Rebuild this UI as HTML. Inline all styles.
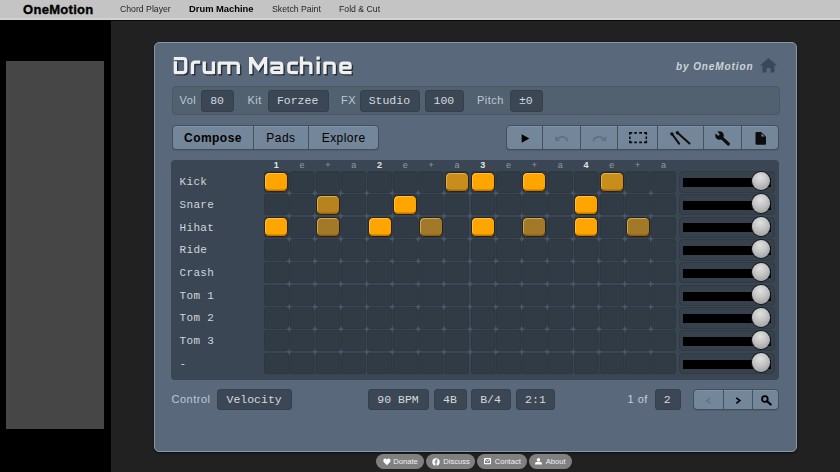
<!DOCTYPE html>
<html><head><meta charset="utf-8">
<style>
*{margin:0;padding:0;box-sizing:border-box}
html,body{width:840px;height:472px;overflow:hidden;background:#212121;font-family:"Liberation Sans",sans-serif}
.a{position:absolute}
#nav{left:0;top:0;width:840px;height:18px;background:#c4c4c4}
#navline{left:0;top:17.8px;width:840px;height:1.8px;background:#d2d2d2;border-bottom:1.2px solid #080808;box-sizing:content-box}
.nl{position:absolute;top:3.1px;font-size:8.6px;color:#262626;line-height:12px;white-space:nowrap;transform-origin:0 0}
#side{left:0;top:19.6px;width:111px;height:453px;background:#000}
#ad{left:6px;top:61px;width:98.3px;height:368.3px;background:#464646}
#panel{left:153.5px;top:41.5px;width:643.5px;height:410.5px;background:#59697b;border:1px solid #8797a7;border-radius:5px;box-shadow:0 1px 2px rgba(0,0,0,.6)}
#title{left:171.8px;top:51px;font-size:22.5px;font-weight:bold;color:#efefef;text-shadow:1.5px 1.5px 1px #27303a;line-height:30px;white-space:nowrap;transform:scaleX(1.165);transform-origin:0 0}
#by{left:676px;top:60px;font-size:10px;font-weight:bold;font-style:italic;color:#cdd2d7;letter-spacing:0.9px;line-height:14px}
#bar{left:171.6px;top:85.5px;width:608px;height:29.5px;background:#526170;border:1px solid #4a5765;border-radius:4px}
.lab{position:absolute;font-size:11px;color:#bfc8d1;letter-spacing:0.5px;line-height:14px;white-space:nowrap}
.box{position:absolute;background:#3b4755;border:1px solid #35404c;border-radius:3px;color:#d4d9de;font-family:"Liberation Mono",monospace;font-size:11.5px;text-align:center;line-height:19.5px;white-space:nowrap;text-indent:-0.8px}
.tabs{position:absolute;border:1px solid #424f5c;border-radius:4px;background:#74869a;overflow:hidden;box-shadow:inset 0 1px 0 #8092a4,0 0.5px 0.5px rgba(0,0,0,.2)}
.tabs>i{position:absolute;top:0;bottom:0;width:1px;background:#44525f}
.tt{position:absolute;top:0.8px;line-height:23px;font-size:12px;color:#000;letter-spacing:0.45px;white-space:nowrap;text-align:center}
#grid{left:171px;top:160px;width:608px;height:219.5px;background:#3a4653;border-radius:4px}
.rl{position:absolute;left:179.6px;font-family:"Liberation Mono",monospace;font-size:11px;color:#d0d5da;letter-spacing:0.3px;line-height:14px;white-space:nowrap}
.hd{position:absolute;top:159px;width:25.82px;text-align:center;font-size:9px;color:#8f9aa5;line-height:12px}
.hd.b{color:#e0e4e8;font-weight:bold}
.c{position:absolute;width:24.5px;height:21.35px;background:#313b46;border-radius:3.5px;box-shadow:inset 0 0 0 0.6px #2d3640}
.bd{position:absolute;height:20.75px;background:#343e49;border-radius:2px}
.dm{position:absolute;width:6px;height:6px;background:radial-gradient(circle,#4a5866 0,#4a5866 0.9px,rgba(74,88,102,0) 2.2px),linear-gradient(#435160,#435160) center/1.3px 100% no-repeat,linear-gradient(#435160,#435160) center/100% 1.3px no-repeat}
.on{position:absolute;width:24px;height:20.2px;background:#ffa500;border:1px solid #2a2418;border-radius:5px;box-shadow:inset 1px 1px 0 rgba(255,225,150,.45),inset 0 -1.5px 0 rgba(120,60,0,.45)}
.on.m{background:#c88d1b}
.on.s{background:#b6831f}
.on.d{background:#a27928}
.sb{position:absolute;left:679.3px;width:95.5px;height:21.35px;background:#36414c;border:1px solid #303a44;border-radius:4px}
.bk{position:absolute;left:683.2px;width:87.5px;height:9px;background:#000}
.kn{position:absolute;left:751.5px;width:18.7px;height:18.7px;border-radius:50%;background:radial-gradient(circle at 45% 30%,#e0e0e0 0,#c6c6c6 40%,#a4a4a4 80%,#868686 100%);box-shadow:0 0 0 1px rgba(20,24,28,.9)}
.pill{position:absolute;top:454px;height:14.8px;border-radius:7.5px;background:#808080;color:#f0f0f0;font-size:7.6px;line-height:15px;white-space:nowrap}
</style></head><body>

<div class="a" id="nav">
  <div class="nl" style="left:23px;top:2px;font-size:13px;font-weight:bold;color:#000;letter-spacing:0.3px;line-height:15px;-webkit-text-stroke:0.35px #000">OneMotion</div>
  <div class="nl" style="left:120px;transform:scaleX(1.012)">Chord Player</div>
  <div class="nl" style="left:189.3px;font-weight:bold;color:#000;transform:scaleX(1.09)">Drum Machine</div>
  <div class="nl" style="left:271.6px;transform:scaleX(1.012)">Sketch Paint</div>
  <div class="nl" style="left:339.2px;transform:scaleX(1.012)">Fold &amp; Cut</div>
</div>
<div class="a" id="navline"></div>
<div class="a" id="side"></div><div class="a" id="ad"></div>
<div class="a" id="panel"></div>
<svg class="a" style="left:0;top:0" width="840" height="100" viewBox="0 0 840 100">
 <defs><filter id="sh" x="-5%" y="-20%" width="110%" height="140%"><feGaussianBlur stdDeviation="0.6"/></filter></defs>
 <g id="tg" fill="none" stroke-width="3.3" stroke-linejoin="round">
  <g transform="translate(1.4,1.4)" stroke="#232b33" filter="url(#sh)" opacity="0.9"><path d="M173.8 58.55 H183.3 Q185.75 58.55 185.75 61 V70.1 Q185.75 72.55 183.3 72.55 H175.35 V61.3
 M192.45 74 V65 Q192.45 62.1 195.3 62.1 H200.2
 M204.25 61.6 V70 Q204.25 72.55 206.8 72.55 H213.4 M213.4 61.6 V74
 M219.25 74 V63.15 H235.8 Q238.3 63.15 238.3 65.6 V74 M228.8 63.15 V74

 M270.3 63.15 H279.3 Q281.8 63.15 281.8 65.6 V74 M281.8 68 H274.3 Q271.8 68 271.8 69.8 V70.5 Q271.8 72.55 274 72.55 H281.8
 M297.9 63.15 H291.3 Q288.85 63.15 288.85 65.6 V70.1 Q288.85 72.55 291.3 72.55 H297.9
 M301.55 56.6 V74 M301.55 63.15 H308.4 Q310.9 63.15 310.9 65.6 V74
 M318.15 56.6 V59.8 M318.15 61.6 V74
 M324.95 74 V63.15 H331.7 Q334.2 63.15 334.2 65.6 V74
 M340.85 67.9 H350.1 V65.6 Q350.1 63.15 347.6 63.15 H343.3 Q340.85 63.15 340.85 65.6 V70.1 Q340.85 72.55 343.3 72.55 H351.6"/><path d="M249 74 V57 H252.7 L258.4 65.6 L263.9 57 H267.3 V74 H264 V63.2 L258.4 71.6 L252.4 63.2 V74 Z" fill="#232b33" stroke="none"/></g>
  <g stroke="#f0f0f0"><path d="M173.8 58.55 H183.3 Q185.75 58.55 185.75 61 V70.1 Q185.75 72.55 183.3 72.55 H175.35 V61.3
 M192.45 74 V65 Q192.45 62.1 195.3 62.1 H200.2
 M204.25 61.6 V70 Q204.25 72.55 206.8 72.55 H213.4 M213.4 61.6 V74
 M219.25 74 V63.15 H235.8 Q238.3 63.15 238.3 65.6 V74 M228.8 63.15 V74

 M270.3 63.15 H279.3 Q281.8 63.15 281.8 65.6 V74 M281.8 68 H274.3 Q271.8 68 271.8 69.8 V70.5 Q271.8 72.55 274 72.55 H281.8
 M297.9 63.15 H291.3 Q288.85 63.15 288.85 65.6 V70.1 Q288.85 72.55 291.3 72.55 H297.9
 M301.55 56.6 V74 M301.55 63.15 H308.4 Q310.9 63.15 310.9 65.6 V74
 M318.15 56.6 V59.8 M318.15 61.6 V74
 M324.95 74 V63.15 H331.7 Q334.2 63.15 334.2 65.6 V74
 M340.85 67.9 H350.1 V65.6 Q350.1 63.15 347.6 63.15 H343.3 Q340.85 63.15 340.85 65.6 V70.1 Q340.85 72.55 343.3 72.55 H351.6"/></g><path d="M249 74 V57 H252.7 L258.4 65.6 L263.9 57 H267.3 V74 H264 V63.2 L258.4 71.6 L252.4 63.2 V74 Z" fill="#f0f0f0" stroke="none"/>
 </g>
 
</svg>
<div class="a" id="by">by OneMotion</div>
<svg class="a" style="left:760px;top:58px" width="17" height="15" viewBox="0 0 17 15"><path d="M8.5 0 L17 7.5 L14.5 7.5 L14.5 14.5 L10.5 14.5 L10.5 10 L6.5 10 L6.5 14.5 L2.5 14.5 L2.5 7.5 L0 7.5 Z" fill="#3b4857"/></svg>

<div class="a" id="bar"></div>
<div class="lab" style="left:179.5px;top:93px">Vol</div>
<div class="box" style="left:201px;top:90px;width:33px;height:21.5px">80</div>
<div class="lab" style="left:247.5px;top:93px">Kit</div>
<div class="box" style="left:267.5px;top:90px;width:61px;height:21.5px">Forzee</div>
<div class="lab" style="left:341px;top:93px">FX</div>
<div class="box" style="left:359.5px;top:90px;width:60.5px;height:21.5px">Studio</div>
<div class="box" style="left:424.5px;top:90px;width:39.5px;height:21.5px">100</div>
<div class="lab" style="left:477px;top:93px">Pitch</div>
<div class="box" style="left:510px;top:90px;width:32.5px;height:21.5px">±0</div>

<div class="tabs" style="left:171.5px;top:125.2px;width:207px;height:25.3px">
  <div class="tt" style="left:0;width:81px;font-weight:bold">Compose</div><i style="left:80.9px"></i>
  <div class="tt" style="left:81.9px;width:53px">Pads</div><i style="left:135.1px"></i>
  <div class="tt" style="left:136.1px;width:70px">Explore</div>
</div>

<div class="tabs" style="left:505.8px;top:125.2px;width:273.2px;height:25.2px">
  <i style="left:35.7px"></i><i style="left:73.1px"></i><i style="left:110.7px"></i><i style="left:150.2px"></i><i style="left:196.4px"></i><i style="left:234px"></i>
</div>
<div class="a" id="grid"></div>
<div class="hd b" style="left:263.30px">1</div>
<div class="hd" style="left:289.12px">e</div>
<div class="hd" style="left:314.94px">+</div>
<div class="hd" style="left:340.76px">a</div>
<div class="hd b" style="left:366.58px">2</div>
<div class="hd" style="left:392.40px">e</div>
<div class="hd" style="left:418.22px">+</div>
<div class="hd" style="left:444.04px">a</div>
<div class="hd b" style="left:469.86px">3</div>
<div class="hd" style="left:495.68px">e</div>
<div class="hd" style="left:521.50px">+</div>
<div class="hd" style="left:547.32px">a</div>
<div class="hd b" style="left:573.14px">4</div>
<div class="hd" style="left:598.96px">e</div>
<div class="hd" style="left:624.78px">+</div>
<div class="hd" style="left:650.60px">a</div>
<div class="rl" style="top:175.10px">Kick</div>
<div class="bd" style="left:264.30px;top:171.50px;width:101.36px"></div>
<div class="bd" style="left:367.58px;top:171.50px;width:101.36px"></div>
<div class="bd" style="left:470.86px;top:171.50px;width:101.36px"></div>
<div class="bd" style="left:574.14px;top:171.50px;width:101.36px"></div>
<div class="c" style="left:264.00px;top:171.20px"></div>
<div class="c" style="left:289.82px;top:171.20px"></div>
<div class="c" style="left:315.64px;top:171.20px"></div>
<div class="c" style="left:341.46px;top:171.20px"></div>
<div class="c" style="left:367.28px;top:171.20px"></div>
<div class="c" style="left:393.10px;top:171.20px"></div>
<div class="c" style="left:418.92px;top:171.20px"></div>
<div class="c" style="left:444.74px;top:171.20px"></div>
<div class="c" style="left:470.56px;top:171.20px"></div>
<div class="c" style="left:496.38px;top:171.20px"></div>
<div class="c" style="left:522.20px;top:171.20px"></div>
<div class="c" style="left:548.02px;top:171.20px"></div>
<div class="c" style="left:573.84px;top:171.20px"></div>
<div class="c" style="left:599.66px;top:171.20px"></div>
<div class="c" style="left:625.48px;top:171.20px"></div>
<div class="c" style="left:651.30px;top:171.20px"></div>
<div class="on " style="left:264.25px;top:171.80px"></div>
<div class="on m" style="left:444.99px;top:171.80px"></div>
<div class="on " style="left:470.81px;top:171.80px"></div>
<div class="on " style="left:522.45px;top:171.80px"></div>
<div class="on m" style="left:599.91px;top:171.80px"></div>
<div class="sb" style="top:171.20px"></div>
<div class="bk" style="top:178.00px"></div>
<div class="kn" style="top:171.70px"></div>
<div class="rl" style="top:197.80px">Snare</div>
<div class="bd" style="left:264.30px;top:194.20px;width:101.36px"></div>
<div class="bd" style="left:367.58px;top:194.20px;width:101.36px"></div>
<div class="bd" style="left:470.86px;top:194.20px;width:101.36px"></div>
<div class="bd" style="left:574.14px;top:194.20px;width:101.36px"></div>
<div class="c" style="left:264.00px;top:193.90px"></div>
<div class="c" style="left:289.82px;top:193.90px"></div>
<div class="c" style="left:315.64px;top:193.90px"></div>
<div class="c" style="left:341.46px;top:193.90px"></div>
<div class="c" style="left:367.28px;top:193.90px"></div>
<div class="c" style="left:393.10px;top:193.90px"></div>
<div class="c" style="left:418.92px;top:193.90px"></div>
<div class="c" style="left:444.74px;top:193.90px"></div>
<div class="c" style="left:470.56px;top:193.90px"></div>
<div class="c" style="left:496.38px;top:193.90px"></div>
<div class="c" style="left:522.20px;top:193.90px"></div>
<div class="c" style="left:548.02px;top:193.90px"></div>
<div class="c" style="left:573.84px;top:193.90px"></div>
<div class="c" style="left:599.66px;top:193.90px"></div>
<div class="c" style="left:625.48px;top:193.90px"></div>
<div class="c" style="left:651.30px;top:193.90px"></div>
<div class="on s" style="left:315.89px;top:194.50px"></div>
<div class="on " style="left:393.35px;top:194.50px"></div>
<div class="on " style="left:574.09px;top:194.50px"></div>
<div class="dm" style="left:286.16px;top:190.24px"></div>
<div class="dm" style="left:311.98px;top:190.24px"></div>
<div class="dm" style="left:337.80px;top:190.24px"></div>
<div class="dm" style="left:363.62px;top:190.24px"></div>
<div class="dm" style="left:389.44px;top:190.24px"></div>
<div class="dm" style="left:415.26px;top:190.24px"></div>
<div class="dm" style="left:441.08px;top:190.24px"></div>
<div class="dm" style="left:466.90px;top:190.24px"></div>
<div class="dm" style="left:492.72px;top:190.24px"></div>
<div class="dm" style="left:518.54px;top:190.24px"></div>
<div class="dm" style="left:544.36px;top:190.24px"></div>
<div class="dm" style="left:570.18px;top:190.24px"></div>
<div class="dm" style="left:596.00px;top:190.24px"></div>
<div class="dm" style="left:621.82px;top:190.24px"></div>
<div class="dm" style="left:647.64px;top:190.24px"></div>
<div class="sb" style="top:193.90px"></div>
<div class="bk" style="top:200.70px"></div>
<div class="kn" style="top:194.40px"></div>
<div class="rl" style="top:220.50px">Hihat</div>
<div class="bd" style="left:264.30px;top:216.90px;width:101.36px"></div>
<div class="bd" style="left:367.58px;top:216.90px;width:101.36px"></div>
<div class="bd" style="left:470.86px;top:216.90px;width:101.36px"></div>
<div class="bd" style="left:574.14px;top:216.90px;width:101.36px"></div>
<div class="c" style="left:264.00px;top:216.60px"></div>
<div class="c" style="left:289.82px;top:216.60px"></div>
<div class="c" style="left:315.64px;top:216.60px"></div>
<div class="c" style="left:341.46px;top:216.60px"></div>
<div class="c" style="left:367.28px;top:216.60px"></div>
<div class="c" style="left:393.10px;top:216.60px"></div>
<div class="c" style="left:418.92px;top:216.60px"></div>
<div class="c" style="left:444.74px;top:216.60px"></div>
<div class="c" style="left:470.56px;top:216.60px"></div>
<div class="c" style="left:496.38px;top:216.60px"></div>
<div class="c" style="left:522.20px;top:216.60px"></div>
<div class="c" style="left:548.02px;top:216.60px"></div>
<div class="c" style="left:573.84px;top:216.60px"></div>
<div class="c" style="left:599.66px;top:216.60px"></div>
<div class="c" style="left:625.48px;top:216.60px"></div>
<div class="c" style="left:651.30px;top:216.60px"></div>
<div class="on " style="left:264.25px;top:217.20px"></div>
<div class="on d" style="left:315.89px;top:217.20px"></div>
<div class="on " style="left:367.53px;top:217.20px"></div>
<div class="on d" style="left:419.17px;top:217.20px"></div>
<div class="on " style="left:470.81px;top:217.20px"></div>
<div class="on d" style="left:522.45px;top:217.20px"></div>
<div class="on " style="left:574.09px;top:217.20px"></div>
<div class="on d" style="left:625.73px;top:217.20px"></div>
<div class="dm" style="left:286.16px;top:212.94px"></div>
<div class="dm" style="left:311.98px;top:212.94px"></div>
<div class="dm" style="left:337.80px;top:212.94px"></div>
<div class="dm" style="left:363.62px;top:212.94px"></div>
<div class="dm" style="left:389.44px;top:212.94px"></div>
<div class="dm" style="left:415.26px;top:212.94px"></div>
<div class="dm" style="left:441.08px;top:212.94px"></div>
<div class="dm" style="left:466.90px;top:212.94px"></div>
<div class="dm" style="left:492.72px;top:212.94px"></div>
<div class="dm" style="left:518.54px;top:212.94px"></div>
<div class="dm" style="left:544.36px;top:212.94px"></div>
<div class="dm" style="left:570.18px;top:212.94px"></div>
<div class="dm" style="left:596.00px;top:212.94px"></div>
<div class="dm" style="left:621.82px;top:212.94px"></div>
<div class="dm" style="left:647.64px;top:212.94px"></div>
<div class="sb" style="top:216.60px"></div>
<div class="bk" style="top:223.40px"></div>
<div class="kn" style="top:217.10px"></div>
<div class="rl" style="top:243.20px">Ride</div>
<div class="bd" style="left:264.30px;top:239.60px;width:101.36px"></div>
<div class="bd" style="left:367.58px;top:239.60px;width:101.36px"></div>
<div class="bd" style="left:470.86px;top:239.60px;width:101.36px"></div>
<div class="bd" style="left:574.14px;top:239.60px;width:101.36px"></div>
<div class="c" style="left:264.00px;top:239.30px"></div>
<div class="c" style="left:289.82px;top:239.30px"></div>
<div class="c" style="left:315.64px;top:239.30px"></div>
<div class="c" style="left:341.46px;top:239.30px"></div>
<div class="c" style="left:367.28px;top:239.30px"></div>
<div class="c" style="left:393.10px;top:239.30px"></div>
<div class="c" style="left:418.92px;top:239.30px"></div>
<div class="c" style="left:444.74px;top:239.30px"></div>
<div class="c" style="left:470.56px;top:239.30px"></div>
<div class="c" style="left:496.38px;top:239.30px"></div>
<div class="c" style="left:522.20px;top:239.30px"></div>
<div class="c" style="left:548.02px;top:239.30px"></div>
<div class="c" style="left:573.84px;top:239.30px"></div>
<div class="c" style="left:599.66px;top:239.30px"></div>
<div class="c" style="left:625.48px;top:239.30px"></div>
<div class="c" style="left:651.30px;top:239.30px"></div>
<div class="dm" style="left:286.16px;top:235.64px"></div>
<div class="dm" style="left:311.98px;top:235.64px"></div>
<div class="dm" style="left:337.80px;top:235.64px"></div>
<div class="dm" style="left:363.62px;top:235.64px"></div>
<div class="dm" style="left:389.44px;top:235.64px"></div>
<div class="dm" style="left:415.26px;top:235.64px"></div>
<div class="dm" style="left:441.08px;top:235.64px"></div>
<div class="dm" style="left:466.90px;top:235.64px"></div>
<div class="dm" style="left:492.72px;top:235.64px"></div>
<div class="dm" style="left:518.54px;top:235.64px"></div>
<div class="dm" style="left:544.36px;top:235.64px"></div>
<div class="dm" style="left:570.18px;top:235.64px"></div>
<div class="dm" style="left:596.00px;top:235.64px"></div>
<div class="dm" style="left:621.82px;top:235.64px"></div>
<div class="dm" style="left:647.64px;top:235.64px"></div>
<div class="sb" style="top:239.30px"></div>
<div class="bk" style="top:246.10px"></div>
<div class="kn" style="top:239.80px"></div>
<div class="rl" style="top:265.90px">Crash</div>
<div class="bd" style="left:264.30px;top:262.30px;width:101.36px"></div>
<div class="bd" style="left:367.58px;top:262.30px;width:101.36px"></div>
<div class="bd" style="left:470.86px;top:262.30px;width:101.36px"></div>
<div class="bd" style="left:574.14px;top:262.30px;width:101.36px"></div>
<div class="c" style="left:264.00px;top:262.00px"></div>
<div class="c" style="left:289.82px;top:262.00px"></div>
<div class="c" style="left:315.64px;top:262.00px"></div>
<div class="c" style="left:341.46px;top:262.00px"></div>
<div class="c" style="left:367.28px;top:262.00px"></div>
<div class="c" style="left:393.10px;top:262.00px"></div>
<div class="c" style="left:418.92px;top:262.00px"></div>
<div class="c" style="left:444.74px;top:262.00px"></div>
<div class="c" style="left:470.56px;top:262.00px"></div>
<div class="c" style="left:496.38px;top:262.00px"></div>
<div class="c" style="left:522.20px;top:262.00px"></div>
<div class="c" style="left:548.02px;top:262.00px"></div>
<div class="c" style="left:573.84px;top:262.00px"></div>
<div class="c" style="left:599.66px;top:262.00px"></div>
<div class="c" style="left:625.48px;top:262.00px"></div>
<div class="c" style="left:651.30px;top:262.00px"></div>
<div class="dm" style="left:286.16px;top:258.34px"></div>
<div class="dm" style="left:311.98px;top:258.34px"></div>
<div class="dm" style="left:337.80px;top:258.34px"></div>
<div class="dm" style="left:363.62px;top:258.34px"></div>
<div class="dm" style="left:389.44px;top:258.34px"></div>
<div class="dm" style="left:415.26px;top:258.34px"></div>
<div class="dm" style="left:441.08px;top:258.34px"></div>
<div class="dm" style="left:466.90px;top:258.34px"></div>
<div class="dm" style="left:492.72px;top:258.34px"></div>
<div class="dm" style="left:518.54px;top:258.34px"></div>
<div class="dm" style="left:544.36px;top:258.34px"></div>
<div class="dm" style="left:570.18px;top:258.34px"></div>
<div class="dm" style="left:596.00px;top:258.34px"></div>
<div class="dm" style="left:621.82px;top:258.34px"></div>
<div class="dm" style="left:647.64px;top:258.34px"></div>
<div class="sb" style="top:262.00px"></div>
<div class="bk" style="top:268.80px"></div>
<div class="kn" style="top:262.50px"></div>
<div class="rl" style="top:288.60px">Tom 1</div>
<div class="bd" style="left:264.30px;top:285.00px;width:101.36px"></div>
<div class="bd" style="left:367.58px;top:285.00px;width:101.36px"></div>
<div class="bd" style="left:470.86px;top:285.00px;width:101.36px"></div>
<div class="bd" style="left:574.14px;top:285.00px;width:101.36px"></div>
<div class="c" style="left:264.00px;top:284.70px"></div>
<div class="c" style="left:289.82px;top:284.70px"></div>
<div class="c" style="left:315.64px;top:284.70px"></div>
<div class="c" style="left:341.46px;top:284.70px"></div>
<div class="c" style="left:367.28px;top:284.70px"></div>
<div class="c" style="left:393.10px;top:284.70px"></div>
<div class="c" style="left:418.92px;top:284.70px"></div>
<div class="c" style="left:444.74px;top:284.70px"></div>
<div class="c" style="left:470.56px;top:284.70px"></div>
<div class="c" style="left:496.38px;top:284.70px"></div>
<div class="c" style="left:522.20px;top:284.70px"></div>
<div class="c" style="left:548.02px;top:284.70px"></div>
<div class="c" style="left:573.84px;top:284.70px"></div>
<div class="c" style="left:599.66px;top:284.70px"></div>
<div class="c" style="left:625.48px;top:284.70px"></div>
<div class="c" style="left:651.30px;top:284.70px"></div>
<div class="dm" style="left:286.16px;top:281.04px"></div>
<div class="dm" style="left:311.98px;top:281.04px"></div>
<div class="dm" style="left:337.80px;top:281.04px"></div>
<div class="dm" style="left:363.62px;top:281.04px"></div>
<div class="dm" style="left:389.44px;top:281.04px"></div>
<div class="dm" style="left:415.26px;top:281.04px"></div>
<div class="dm" style="left:441.08px;top:281.04px"></div>
<div class="dm" style="left:466.90px;top:281.04px"></div>
<div class="dm" style="left:492.72px;top:281.04px"></div>
<div class="dm" style="left:518.54px;top:281.04px"></div>
<div class="dm" style="left:544.36px;top:281.04px"></div>
<div class="dm" style="left:570.18px;top:281.04px"></div>
<div class="dm" style="left:596.00px;top:281.04px"></div>
<div class="dm" style="left:621.82px;top:281.04px"></div>
<div class="dm" style="left:647.64px;top:281.04px"></div>
<div class="sb" style="top:284.70px"></div>
<div class="bk" style="top:291.50px"></div>
<div class="kn" style="top:285.20px"></div>
<div class="rl" style="top:311.30px">Tom 2</div>
<div class="bd" style="left:264.30px;top:307.70px;width:101.36px"></div>
<div class="bd" style="left:367.58px;top:307.70px;width:101.36px"></div>
<div class="bd" style="left:470.86px;top:307.70px;width:101.36px"></div>
<div class="bd" style="left:574.14px;top:307.70px;width:101.36px"></div>
<div class="c" style="left:264.00px;top:307.40px"></div>
<div class="c" style="left:289.82px;top:307.40px"></div>
<div class="c" style="left:315.64px;top:307.40px"></div>
<div class="c" style="left:341.46px;top:307.40px"></div>
<div class="c" style="left:367.28px;top:307.40px"></div>
<div class="c" style="left:393.10px;top:307.40px"></div>
<div class="c" style="left:418.92px;top:307.40px"></div>
<div class="c" style="left:444.74px;top:307.40px"></div>
<div class="c" style="left:470.56px;top:307.40px"></div>
<div class="c" style="left:496.38px;top:307.40px"></div>
<div class="c" style="left:522.20px;top:307.40px"></div>
<div class="c" style="left:548.02px;top:307.40px"></div>
<div class="c" style="left:573.84px;top:307.40px"></div>
<div class="c" style="left:599.66px;top:307.40px"></div>
<div class="c" style="left:625.48px;top:307.40px"></div>
<div class="c" style="left:651.30px;top:307.40px"></div>
<div class="dm" style="left:286.16px;top:303.74px"></div>
<div class="dm" style="left:311.98px;top:303.74px"></div>
<div class="dm" style="left:337.80px;top:303.74px"></div>
<div class="dm" style="left:363.62px;top:303.74px"></div>
<div class="dm" style="left:389.44px;top:303.74px"></div>
<div class="dm" style="left:415.26px;top:303.74px"></div>
<div class="dm" style="left:441.08px;top:303.74px"></div>
<div class="dm" style="left:466.90px;top:303.74px"></div>
<div class="dm" style="left:492.72px;top:303.74px"></div>
<div class="dm" style="left:518.54px;top:303.74px"></div>
<div class="dm" style="left:544.36px;top:303.74px"></div>
<div class="dm" style="left:570.18px;top:303.74px"></div>
<div class="dm" style="left:596.00px;top:303.74px"></div>
<div class="dm" style="left:621.82px;top:303.74px"></div>
<div class="dm" style="left:647.64px;top:303.74px"></div>
<div class="sb" style="top:307.40px"></div>
<div class="bk" style="top:314.20px"></div>
<div class="kn" style="top:307.90px"></div>
<div class="rl" style="top:334.00px">Tom 3</div>
<div class="bd" style="left:264.30px;top:330.40px;width:101.36px"></div>
<div class="bd" style="left:367.58px;top:330.40px;width:101.36px"></div>
<div class="bd" style="left:470.86px;top:330.40px;width:101.36px"></div>
<div class="bd" style="left:574.14px;top:330.40px;width:101.36px"></div>
<div class="c" style="left:264.00px;top:330.10px"></div>
<div class="c" style="left:289.82px;top:330.10px"></div>
<div class="c" style="left:315.64px;top:330.10px"></div>
<div class="c" style="left:341.46px;top:330.10px"></div>
<div class="c" style="left:367.28px;top:330.10px"></div>
<div class="c" style="left:393.10px;top:330.10px"></div>
<div class="c" style="left:418.92px;top:330.10px"></div>
<div class="c" style="left:444.74px;top:330.10px"></div>
<div class="c" style="left:470.56px;top:330.10px"></div>
<div class="c" style="left:496.38px;top:330.10px"></div>
<div class="c" style="left:522.20px;top:330.10px"></div>
<div class="c" style="left:548.02px;top:330.10px"></div>
<div class="c" style="left:573.84px;top:330.10px"></div>
<div class="c" style="left:599.66px;top:330.10px"></div>
<div class="c" style="left:625.48px;top:330.10px"></div>
<div class="c" style="left:651.30px;top:330.10px"></div>
<div class="dm" style="left:286.16px;top:326.44px"></div>
<div class="dm" style="left:311.98px;top:326.44px"></div>
<div class="dm" style="left:337.80px;top:326.44px"></div>
<div class="dm" style="left:363.62px;top:326.44px"></div>
<div class="dm" style="left:389.44px;top:326.44px"></div>
<div class="dm" style="left:415.26px;top:326.44px"></div>
<div class="dm" style="left:441.08px;top:326.44px"></div>
<div class="dm" style="left:466.90px;top:326.44px"></div>
<div class="dm" style="left:492.72px;top:326.44px"></div>
<div class="dm" style="left:518.54px;top:326.44px"></div>
<div class="dm" style="left:544.36px;top:326.44px"></div>
<div class="dm" style="left:570.18px;top:326.44px"></div>
<div class="dm" style="left:596.00px;top:326.44px"></div>
<div class="dm" style="left:621.82px;top:326.44px"></div>
<div class="dm" style="left:647.64px;top:326.44px"></div>
<div class="sb" style="top:330.10px"></div>
<div class="bk" style="top:336.90px"></div>
<div class="kn" style="top:330.60px"></div>
<div class="rl" style="top:356.70px">-</div>
<div class="bd" style="left:264.30px;top:353.10px;width:101.36px"></div>
<div class="bd" style="left:367.58px;top:353.10px;width:101.36px"></div>
<div class="bd" style="left:470.86px;top:353.10px;width:101.36px"></div>
<div class="bd" style="left:574.14px;top:353.10px;width:101.36px"></div>
<div class="c" style="left:264.00px;top:352.80px"></div>
<div class="c" style="left:289.82px;top:352.80px"></div>
<div class="c" style="left:315.64px;top:352.80px"></div>
<div class="c" style="left:341.46px;top:352.80px"></div>
<div class="c" style="left:367.28px;top:352.80px"></div>
<div class="c" style="left:393.10px;top:352.80px"></div>
<div class="c" style="left:418.92px;top:352.80px"></div>
<div class="c" style="left:444.74px;top:352.80px"></div>
<div class="c" style="left:470.56px;top:352.80px"></div>
<div class="c" style="left:496.38px;top:352.80px"></div>
<div class="c" style="left:522.20px;top:352.80px"></div>
<div class="c" style="left:548.02px;top:352.80px"></div>
<div class="c" style="left:573.84px;top:352.80px"></div>
<div class="c" style="left:599.66px;top:352.80px"></div>
<div class="c" style="left:625.48px;top:352.80px"></div>
<div class="c" style="left:651.30px;top:352.80px"></div>
<div class="dm" style="left:286.16px;top:349.14px"></div>
<div class="dm" style="left:311.98px;top:349.14px"></div>
<div class="dm" style="left:337.80px;top:349.14px"></div>
<div class="dm" style="left:363.62px;top:349.14px"></div>
<div class="dm" style="left:389.44px;top:349.14px"></div>
<div class="dm" style="left:415.26px;top:349.14px"></div>
<div class="dm" style="left:441.08px;top:349.14px"></div>
<div class="dm" style="left:466.90px;top:349.14px"></div>
<div class="dm" style="left:492.72px;top:349.14px"></div>
<div class="dm" style="left:518.54px;top:349.14px"></div>
<div class="dm" style="left:544.36px;top:349.14px"></div>
<div class="dm" style="left:570.18px;top:349.14px"></div>
<div class="dm" style="left:596.00px;top:349.14px"></div>
<div class="dm" style="left:621.82px;top:349.14px"></div>
<div class="dm" style="left:647.64px;top:349.14px"></div>
<div class="sb" style="top:352.80px"></div>
<div class="bk" style="top:359.60px"></div>
<div class="kn" style="top:353.30px"></div>
<div class="lab" style="left:171.5px;top:391.5px">Control</div>
<div class="box" style="left:217px;top:388.7px;width:75px;height:21px">Velocity</div>
<div class="box" style="left:368.2px;top:388.7px;width:60.5px;height:21.3px">90 BPM</div>
<div class="box" style="left:433.7px;top:388.7px;width:33.3px;height:21.3px">4B</div>
<div class="box" style="left:471.2px;top:388.7px;width:39.5px;height:21.3px">B/4</div>
<div class="box" style="left:516.2px;top:388.7px;width:39.3px;height:21.3px">2:1</div>
<div class="lab" style="left:627.5px;top:391.5px;color:#c8cfd6">1 of</div>
<div class="box" style="left:654.5px;top:389px;width:26px;height:20.6px">2</div>
<div class="tabs" style="left:693.4px;top:389.2px;width:86px;height:20.5px">
  <i style="left:29px"></i><i style="left:57.8px"></i>
</div>

<div class="pill" style="left:376.3px;width:47.7px"><svg class="a" style="left:6.3px;top:3.6px" width="8" height="8" viewBox="0 0 8 8"><path d="M3.9 7.3 L0.9 4.2 C-0.2 3 0.3 0.6 2.1 0.6 C3 0.6 3.6 1.2 3.9 1.8 C4.2 1.2 4.8 0.6 5.7 0.6 C7.5 0.6 8 3 6.9 4.2 Z" fill="#fff"/></svg><span class="a" style="left:17px;top:0">Donate</span></div>
<div class="pill" style="left:426.3px;width:49px"><svg class="a" style="left:6.2px;top:3.5px" width="8" height="8" viewBox="0 0 8 8"><circle cx="4" cy="4" r="3.7" fill="#fff"/><path d="M3.4 7.9 V4.6 H2.5 V3.6 H3.4 V2.9 C3.4 1.8 4 1.3 5 1.3 H5.7 V2.3 H5.2 C4.8 2.3 4.6 2.5 4.6 2.9 V3.6 H5.7 L5.5 4.6 H4.6 V7.9 Z" fill="#808080"/></svg><span class="a" style="left:17px;top:0">Discuss</span></div>
<div class="pill" style="left:477.2px;width:49.4px"><svg class="a" style="left:6.9px;top:4.4px" width="7" height="6.2" viewBox="0 0 7 6.2"><rect x="0" y="0" width="7" height="6.2" rx="0.6" fill="#fff"/><rect x="1" y="1.1" width="5" height="4" fill="#808080"/><path d="M1 1.3 L3.5 3.6 L6 1.3" stroke="#fff" stroke-width="1" fill="none"/></svg><span class="a" style="left:17.5px;top:0">Contact</span></div>
<div class="pill" style="left:529.2px;width:42.9px"><svg class="a" style="left:6.3px;top:4.1px" width="7" height="6.5" viewBox="0 0 7 6.5"><circle cx="3.5" cy="1.7" r="1.7" fill="#fff"/><path d="M0 6.5 V5.6 C0 4.3 1.4 3.7 3.5 3.7 C5.6 3.7 7 4.3 7 5.6 V6.5 Z" fill="#fff"/></svg><span class="a" style="left:16.5px;top:0">About</span></div>

<svg class="a" style="left:0;top:0" width="840" height="472" viewBox="0 0 840 472">
 <path d="M521.7 134.2 L529.3 138.5 L521.7 142.8 Z" fill="#000"/>
 <g fill="none" stroke="#5f7083" stroke-width="1.7">
  <path d="M567.4 141.2 A5.4 4.4 0 0 0 558 138.3"/>
  <path d="M593.4 141.2 A5.4 4.4 0 0 1 602.8 138.3"/>
 </g>
 <path d="M555.2 135.8 L555.2 141 L560.4 141 Z" fill="#5f7083"/>
 <path d="M606.2 135.8 L606.2 141 L601 141 Z" fill="#5f7083"/>
 <g stroke="#0d0d0d" stroke-width="1.6" fill="none">
  <path d="M629.1 132.9 H632.2 M634.2 132.9 H636.9 M639.2 132.9 H642 M644 132.9 H647"/>
  <path d="M629.1 142.4 H632.2 M634.2 142.4 H636.9 M639.2 142.4 H642 M644 142.4 H647"/>
  <path d="M629.9 132.1 V134.8 M629.9 136.5 V139 M629.9 140.6 V143.1"/>
  <path d="M646.3 132.1 V134.8 M646.3 136.5 V139 M646.3 140.6 V143.1"/>
 </g>
 <g stroke="#0d0d0d" stroke-linecap="round" fill="none">
  <path d="M672 134 L679.1 143.6" stroke-width="2"/>
  <path d="M677.5 132.8 L689.5 143.6" stroke-width="2"/>
 </g>
 <circle cx="671.9" cy="133.9" r="1.7" fill="#0d0d0d"/>
 <circle cx="677.4" cy="132.8" r="1.7" fill="#0d0d0d"/>
 <path d="M721 137.2 L728.4 144" stroke="#0d0d0d" stroke-width="3.1" stroke-linecap="round"/>
 <circle cx="719.5" cy="135.5" r="4.3" fill="#0d0d0d"/>
 <path d="M718.3 134.3 L714.2 130.2" stroke="#74869a" stroke-width="2.5" stroke-linecap="round"/>
 <path d="M755.5 133 Q755.5 132 756.5 132 L761.2 132 L766 136.8 L766 143.8 Q766 144.8 765 144.8 L756.5 144.8 Q755.5 144.8 755.5 143.8 Z" fill="#0d0d0d"/>
 <path d="M761.4 133.4 L761.4 136.6 L764.6 136.6 Z" fill="#74869a"/>
 <path d="M710.6 397.8 L706.5 400.7 L710.6 403.6" stroke="#617285" stroke-width="1.3" fill="none"/>
 <path d="M736.3 397.8 L739.9 400.6 L736.3 403.4" stroke="#000" stroke-width="1.6" fill="none"/>
 <circle cx="764.9" cy="399" r="2.8" stroke="#000" stroke-width="1.8" fill="none"/>
 <path d="M767.2 401.4 L770.7 404.5" stroke="#000" stroke-width="2.2" stroke-linecap="round"/>
</svg>
</body></html>
